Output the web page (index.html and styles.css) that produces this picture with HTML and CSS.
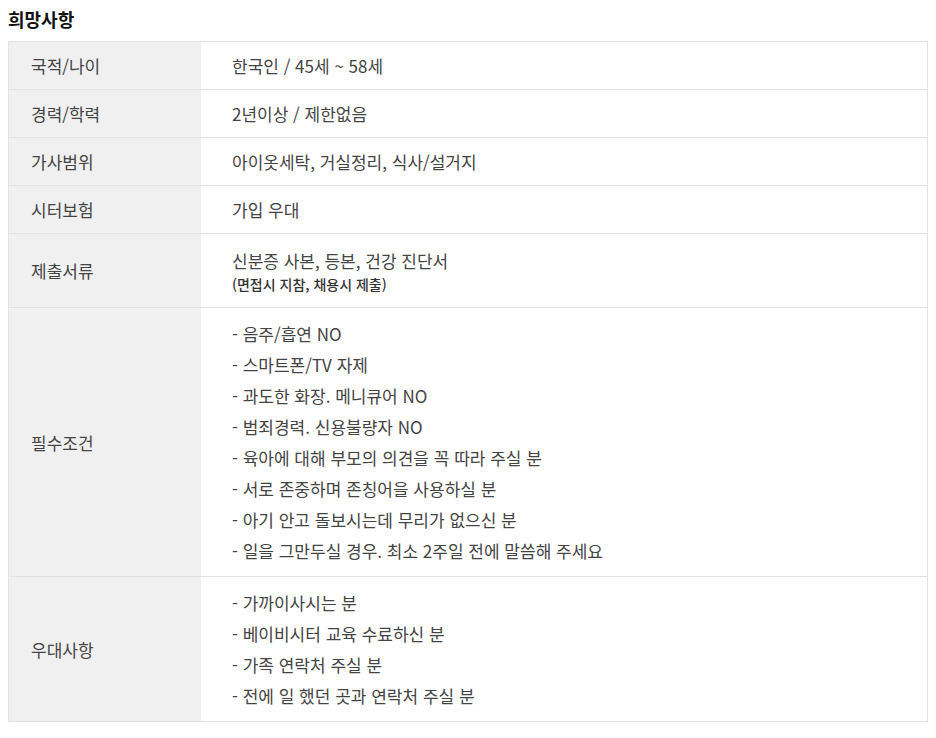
FILE: index.html
```html
<!DOCTYPE html>
<html lang="ko">
<head>
<meta charset="utf-8">
<link rel="stylesheet" href="styles.css">
</head>
<body>
<h2 class="title">희망사항</h2>
<div class="table">
  <div class="row row-single">
    <div class="label">국적/나이</div>
    <div class="value">한국인 / 45세 ~ 58세</div>
  </div>
  <div class="row row-single">
    <div class="label">경력/학력</div>
    <div class="value">2년이상 / 제한없음</div>
  </div>
  <div class="row row-single">
    <div class="label">가사범위</div>
    <div class="value">아이옷세탁, 거실정리, 식사/설거지</div>
  </div>
  <div class="row row-single">
    <div class="label">시터보험</div>
    <div class="value">가입 우대</div>
  </div>
  <div class="row row-docs">
    <div class="label">제출서류</div>
    <div class="value">
      <p class="line">신분증 사본, 등본, 건강 진단서</p>
      <p class="note">(면접시 지참, 채용시 제출)</p>
    </div>
  </div>
  <div class="row row-list">
    <div class="label">필수조건</div>
    <div class="value">
      <p class="item">- 음주/흡연 NO</p>
      <p class="item">- 스마트폰/TV 자제</p>
      <p class="item">- 과도한 화장. 메니큐어 NO</p>
      <p class="item">- 범죄경력. 신용불량자 NO</p>
      <p class="item">- 육아에 대해 부모의 의견을 꼭 따라 주실 분</p>
      <p class="item">- 서로 존중하며 존칭어을 사용하실 분</p>
      <p class="item">- 아기 안고 돌보시는데 무리가 없으신 분</p>
      <p class="item">- 일을 그만두실 경우. 최소 2주일 전에 말씀해 주세요</p>
    </div>
  </div>
  <div class="row row-list row-last">
    <div class="label">우대사항</div>
    <div class="value">
      <p class="item">- 가까이사시는 분</p>
      <p class="item">- 베이비시터 교육 수료하신 분</p>
      <p class="item">- 가족 연락처 주실 분</p>
      <p class="item">- 전에 일 했던 곳과 연락처 주실 분</p>
    </div>
  </div>
</div>
</body>
</html>
```

FILE: styles.css
```css
* { box-sizing: border-box; }
body {
  margin: 0;
  padding: 8px;
  background: #fff;
  font-family: "Noto Sans CJK KR", "Noto Sans", sans-serif;
  color: #444;
}
.title {
  margin: 0;
  height: 33px;
  padding-top: 0;
  font-size: 18px;
  line-height: 22px;
  font-weight: 700;
  color: #111;
}
.table {
  width: 920px;
  border: 1px solid #e3e3e3;
}
.row {
  display: flex;
  border-top: 1px solid #e3e3e3;
}
.row:first-child { border-top: none; }
.label {
  width: 192px;
  flex: none;
  background: #f0f0f0;
  display: flex;
  align-items: center;
  padding-left: 22px;
  font-size: 17px;
  color: #444;
}
.value {
  flex: 1;
  padding-left: 31px;
  font-size: 17px;
  color: #444;
  display: flex;
  flex-direction: column;
  justify-content: center;
}
.row-single { height: 48px; }
.row-single:first-child { height: 47px; }
.row-docs { height: 74px; }
.row-list .value { padding-top: 10px; padding-bottom: 10px; }
.line { margin: 0; line-height: 26px; }
.note { margin: 0; line-height: 20px; font-size: 14px; font-weight: 500; color: #333; }
.item { margin: 0; line-height: 31px; }
```
